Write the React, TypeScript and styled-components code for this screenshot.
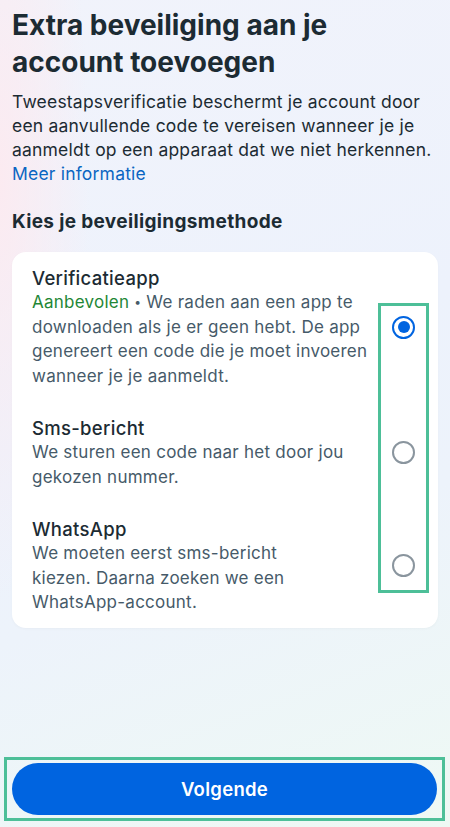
import React from "react";
import styled, { createGlobalStyle } from "styled-components";

const Global = createGlobalStyle`
  html, body { margin: 0; padding: 0; }
  body { font-family: Inter, "Noto Sans", Roboto, sans-serif; -webkit-font-smoothing: antialiased; }
  * { box-sizing: border-box; }
`;

const Page = styled.div`
  width: 450px;
  height: 827px;
  display: flex;
  flex-direction: column;
  padding: 0 12px;
  background:
    radial-gradient(ellipse 90px 420px at 0px 180px, rgba(252, 234, 240, 0.95), rgba(252, 234, 240, 0)),
    linear-gradient(160deg, #f1f3fb 0%, #edf2fc 45%, #edf3fb 65%, #eef9f4 100%);
  color: #1c2b33;
  overflow: hidden;
`;

const Title = styled.h1`
  margin: 7px 0 0;
  font-size: 28px;
  line-height: 37px;
  font-weight: 700;
  color: #1c2b33;
`;

const Intro = styled.p`
  margin: 9px 0 0;
  font-size: 17.5px;
  line-height: 24px;
  letter-spacing: 0.2px;
  font-weight: 400;
  color: #1c2b33;
`;

const Link = styled.a`
  color: #0a66c2;
  text-decoration: none;
`;

const SectionHeading = styled.h2`
  margin: 24px 0 0;
  font-size: 19px;
  line-height: 24px;
  letter-spacing: 0.35px;
  font-weight: 700;
  color: #1c2b33;
`;

const Card = styled.div`
  position: relative;
  margin-top: 18px;
  background: #ffffff;
  border-radius: 14px;
  padding: 14px 23px 13px 20px;
  display: flex;
  flex-direction: column;
  gap: 28px;
  box-shadow: 0 1px 3px rgba(0, 0, 0, 0.03);
`;

const Option = styled.label`
  display: flex;
  align-items: center;
  gap: 20px;
  cursor: pointer;
`;

const OptionText = styled.div`
  flex: 1;
  display: flex;
  flex-direction: column;
`;

const OptionTitle = styled.div`
  font-size: 18.5px;
  line-height: 24px;
  letter-spacing: 0.3px;
  font-weight: 500;
  color: #1c2b33;
`;

const OptionDesc = styled.div`
  font-size: 17px;
  line-height: 24.5px;
  letter-spacing: 0.25px;
  color: #465a69;
`;

const Recommended = styled.span`
  color: #1f8736;
`;

const Dot = styled.span`
  font-size: 12px;
  vertical-align: 2px;
`;

const Radio = styled.span<{ $checked?: boolean }>`
  flex: none;
  width: 23px;
  height: 23px;
  border-radius: 50%;
  border: ${(p) => (p.$checked ? "2.5px solid #0064e0" : "2px solid #8a959e")};
  display: flex;
  align-items: center;
  justify-content: center;
  &::after {
    content: "";
    display: ${(p) => (p.$checked ? "block" : "none")};
    width: 12px;
    height: 12px;
    border-radius: 50%;
    background: #0064e0;
  }
`;

const Highlight = styled.div`
  position: absolute;
  left: 366px;
  top: 51px;
  width: 51px;
  height: 290px;
  border: 3px solid #4dbf98;
  pointer-events: none;
`;

const Spacer = styled.div`
  flex: 1;
`;

const ButtonFrame = styled.div`
  margin: 0 -7px 6px -8px;
  border: 3px solid #4dbf98;
  padding: 3px 5px;
`;

const PrimaryButton = styled.button`
  width: 100%;
  height: 52px;
  border: none;
  border-radius: 26px;
  background: #0064e0;
  color: #ffffff;
  font-family: inherit;
  font-size: 18.5px;
  letter-spacing: 0.3px;
  font-weight: 600;
  cursor: pointer;
`;

export default function App() {
  return (
    <>
      <Global />
      <Page>
        <Title>
          Extra beveiliging aan je
          <br />
          account toevoegen
        </Title>
        <Intro>
          Tweestapsverificatie beschermt je account door
          <br />
          een aanvullende code te vereisen wanneer je je
          <br />
          aanmeldt op een apparaat dat we niet herkennen.
          <br />
          <Link href="#">Meer informatie</Link>
        </Intro>
        <SectionHeading>Kies je beveiligingsmethode</SectionHeading>
        <Card>
          <Option>
            <OptionText>
              <OptionTitle>Verificatieapp</OptionTitle>
              <OptionDesc>
                <Recommended>Aanbevolen</Recommended> <Dot>•</Dot> We raden aan een app te
                <br />
                downloaden als je er geen hebt. De app
                <br />
                genereert een code die je moet invoeren
                <br />
                wanneer je je aanmeldt.
              </OptionDesc>
            </OptionText>
            <Radio $checked />
          </Option>
          <Option>
            <OptionText>
              <OptionTitle>Sms-bericht</OptionTitle>
              <OptionDesc>
                We sturen een code naar het door jou
                <br />
                gekozen nummer.
              </OptionDesc>
            </OptionText>
            <Radio />
          </Option>
          <Option>
            <OptionText>
              <OptionTitle>WhatsApp</OptionTitle>
              <OptionDesc>
                We moeten eerst sms-bericht
                <br />
                kiezen. Daarna zoeken we een
                <br />
                WhatsApp-account.
              </OptionDesc>
            </OptionText>
            <Radio />
          </Option>
          <Highlight />
        </Card>
        <Spacer />
        <ButtonFrame>
          <PrimaryButton>Volgende</PrimaryButton>
        </ButtonFrame>
      </Page>
    </>
  );
}
